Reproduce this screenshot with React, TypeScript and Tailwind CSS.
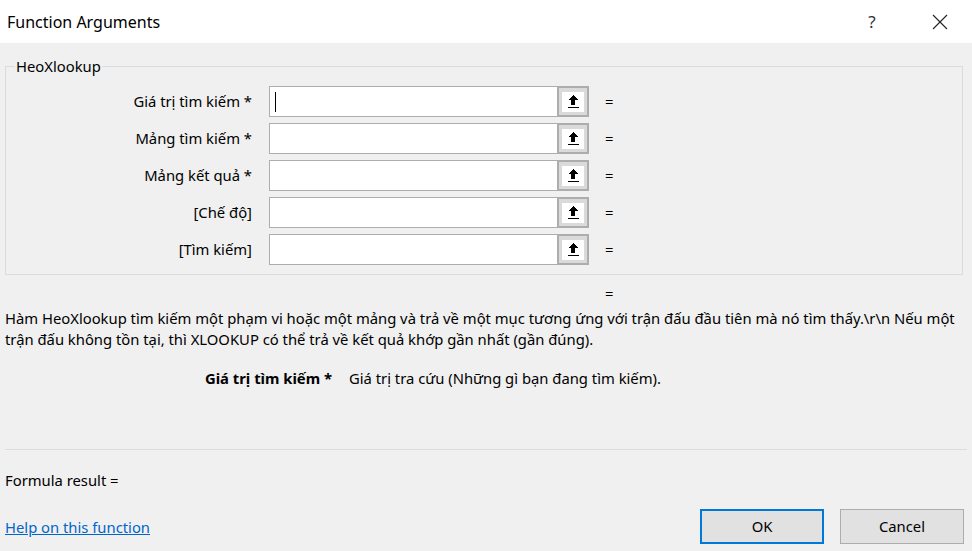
import React from 'react';

const args = [
  { label: 'Giá trị tìm kiếm *', focused: true },
  { label: 'Mảng tìm kiếm *' },
  { label: 'Mảng kết quả *' },
  { label: '[Chế độ]' },
  { label: '[Tìm kiếm]' },
];

const RefIcon: React.FC = () => (
  <svg width="22" height="20" viewBox="0 0 22 20" shapeRendering="crispEdges">
    <rect x="0" y="0" width="22" height="20" fill="#ffffff" />
    <path d="M11 3 L6 8 L9 8 L9 13 L13 13 L13 8 L16 8 Z" fill="#000000" />
    <rect x="6" y="15" width="11" height="1" fill="#000000" />
  </svg>
);

const ArgRow: React.FC<{ label: string; focused?: boolean }> = ({ label, focused }) => (
  <div className="flex items-center h-[31px] mb-[6px]">
    <div className="w-[248px] text-right pr-[1px] whitespace-nowrap">{label}</div>
    <div className="ml-[16px] w-[288px] h-[31px] bg-white border border-[#adadad] border-r-0 flex items-center pl-[5px]">
      {focused && <div className="w-[1px] h-[20px] bg-black" />}
    </div>
    <div className="w-[32px] h-[31px] border-2 border-[#adadad] bg-[#dadada] flex items-center justify-center">
      <RefIcon />
    </div>
    <div className="ml-[16px]">=</div>
  </div>
);

const App: React.FC = () => {
  return (
    <div
      className="w-[972px] h-[551px] bg-[#f0f0f0] flex flex-col text-[14.8px] text-black overflow-hidden"
      style={{ fontFamily: '"Noto Sans", "Open Sans", sans-serif' }}
    >
      {/* Title bar */}
      <div className="h-[43px] bg-white flex items-center shrink-0">
        <div className="ml-[7px] text-[16px] flex-1">Function Arguments</div>
        <div className="w-[20px] text-[17px] text-[#333] mr-[50px] text-center">?</div>
        <svg width="16" height="16" viewBox="0 0 16 16" className="mr-[24px]">
          <path d="M1 1 L15 15 M15 1 L1 15" stroke="#222" strokeWidth="1.1" fill="none" />
        </svg>
      </div>

      <div className="px-[5px] flex flex-col">
        {/* Arguments group */}
        <fieldset className="mt-[15px] border border-[#dcdcdc] pb-[3px] h-[217px] w-[958px]">
          <legend className="ml-[9px] px-[1px] leading-[16px]">HeoXlookup</legend>
          <div className="pt-[12px] -ml-[1px]">
            {args.map((a) => (
              <ArgRow key={a.label} label={a.label} focused={a.focused} />
            ))}
          </div>
        </fieldset>

        <div className="h-[20px] mt-[7px] pl-[600px]">=</div>

        {/* Description */}
        <div className="mt-[6px] leading-[21px] whitespace-nowrap">
          Hàm HeoXlookup tìm kiếm một phạm vi hoặc một mảng và trả về một mục tương ứng với trận đấu đầu tiên mà nó tìm thấy.\r\n Nếu một
          <br />
          trận đấu không tồn tại, thì XLOOKUP có thể trả về kết quả khớp gần nhất (gần đúng).
        </div>

        <div className="mt-[18px] flex leading-[21px]">
          <div className="w-[327px] text-right font-bold whitespace-nowrap">Giá trị tìm kiếm *</div>
          <div className="ml-[17px] whitespace-nowrap">Giá trị tra cứu (Những gì bạn đang tìm kiếm).</div>
        </div>

        <div className="mt-[60px] h-[1px] bg-[#dcdcdc] w-[962px]" />

        <div className="mt-[20px] leading-[21px]">Formula result =</div>

        <div className="mt-[18px] flex items-center">
          <a href="#" className="text-[#0066cc] underline flex-1 leading-[21px] -mb-[2px]">
            Help on this function
          </a>
          <button className="w-[124px] h-[35px] bg-[#e1e1e1] border-2 border-[#0078d7]">OK</button>
          <button className="ml-[16px] mr-[3px] w-[124px] h-[35px] bg-[#e1e1e1] border border-[#adadad]">Cancel</button>
        </div>
      </div>
    </div>
  );
};

export default App;
